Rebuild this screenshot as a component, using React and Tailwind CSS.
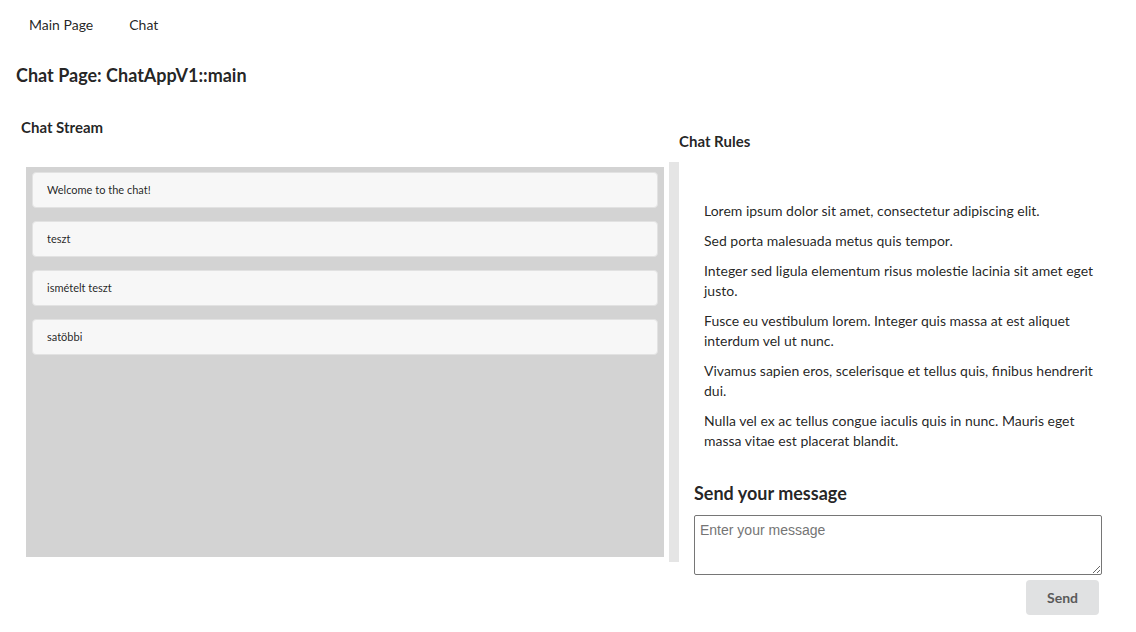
import React from "react";

const messages = ["Welcome to the chat!", "teszt", "ismételt teszt", "satöbbi"];
const rules = [
  "Lorem ipsum dolor sit amet, consectetur adipiscing elit.",
  "Sed porta malesuada metus quis tempor.",
  "Integer sed ligula elementum risus molestie lacinia sit amet eget justo.",
  "Fusce eu vestibulum lorem. Integer quis massa at est aliquet interdum vel ut nunc.",
  "Vivamus sapien eros, scelerisque et tellus quis, finibus hendrerit dui.",
  "Nulla vel ex ac tellus congue iaculis quis in nunc. Mauris eget massa vitae est placerat blandit.",
];

export default function App() {
  return (
    <div
      className="w-[1136px] h-[632px] bg-white text-[rgba(0,0,0,0.87)] text-[14px] leading-[20px]"
      style={{ fontFamily: "Lato, 'Noto Sans', sans-serif" }}
    >
      <nav className="flex pl-[29px] pt-[15px] gap-[36px] h-[35px]">
        <span>Main Page</span>
        <span>Chat</span>
      </nav>
      <h1 className="pl-[16px] mt-[29px] text-[18px] leading-[22px] font-bold">
        Chat Page: ChatAppV1::main
      </h1>
      <div className="flex mt-[14px]">
        <div className="w-[669px]">
          <h3 className="pl-[21px] mt-[17px] text-[15px] leading-[20px] font-bold">Chat Stream</h3>
          <div className="mt-[30px] ml-[26px] w-[638px] h-[390px] bg-[#d3d3d3] px-[6px] pt-[5px] flex flex-col gap-[13px]">
            {messages.map((m) => (
              <div
                key={m}
                className="h-[36px] bg-[#f7f7f7] rounded-[4px] border border-[#e2e2e2] flex items-center pl-[14px] text-[11px]"
              >
                {m}
              </div>
            ))}
          </div>
        </div>
        <div className="w-[10px] h-[400px] mt-[62px] bg-[#e5e5e5]" />
        <div className="w-[440px]">
          <h3 className="mt-[31px] text-[15px] leading-[20px] font-bold">Chat Rules</h3>
          <div className="pl-[25px] mt-[50px] w-[423px] flex flex-col gap-[10px]">
            {rules.map((r) => (
              <p key={r}>{r}</p>
            ))}
          </div>
          <div className="pl-[15px] mt-[31px]">
            <h2 className="text-[18px] leading-[22px] font-bold">Send your message</h2>
            <textarea
              placeholder="Enter your message"
              className="block mt-[11px] w-[408px] h-[60px] border border-[#767676] rounded-[2px] px-[5px] py-[4px] text-[14px] placeholder:text-[#757575]"
              style={{ fontFamily: "'Liberation Sans', Arial, sans-serif" }}
            />
            <div className="w-[405px] flex justify-end mt-[5px]">
              <button className="w-[73px] h-[35px] bg-[#e0e1e2] rounded-[4px] text-[#5a5a5a] font-bold text-[14px]">
                Send
              </button>
            </div>
          </div>
        </div>
      </div>
    </div>
  );
}
